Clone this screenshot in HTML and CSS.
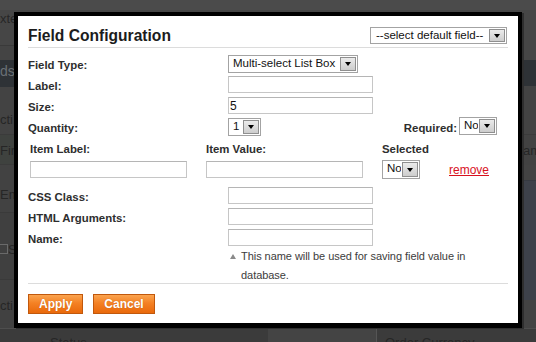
FILE: index.html
```html
<!DOCTYPE html>
<html>
<head>
<meta charset="utf-8">
<link rel="stylesheet" href="styles.css">
</head>
<body>
<div class="page">
  <div class="bg-col">
    <div class="band b-top"></div>
    <div class="band b-ctx"><span class="t">xte</span></div>
    <div class="band b-gap"></div>
    <div class="band b-dark"><span class="t t-fields">ds</span></div>
    <div class="band b-act"><span class="t">cti</span></div>
    <div class="band b-first"><span class="t">Firs</span></div>
    <div class="band b-email"><span class="t">Em</span></div>
    <div class="band b-chk"><span class="chk"></span><span class="t">S</span></div>
    <div class="band b-act2"><span class="t">cti</span></div>
    <div class="band b-bottom"><span class="t t-bot">Status</span></div>
  </div>
  <div class="bg-col">
    <div class="band b-top"></div>
    <div class="band r-a"></div>
    <div class="band b-dark r-dark"></div>
    <div class="band r-b"></div>
    <div class="band r-name"><span class="t t-name">am</span></div>
    <div class="band r-c"></div>
    <div class="band r-blue"></div>
    <div class="band r-d"></div>
    <div class="band b-bottom r-bottom"><span class="t t-order">Order Currency</span></div>
  </div>
</div>

<div class="modal">
  <div class="modal-head">
    <h2 class="title">Field Configuration</h2>
    <div class="sel sel-default"><span class="sel-text">--select default field--</span><span class="sel-btn"></span></div>
  </div>

  <div class="fields">
    <div class="row">
      <span class="lbl">Field Type:</span>
      <div class="ctl"><div class="sel sel-type"><span class="sel-text">Multi-select List Box</span><span class="sel-btn"></span></div></div>
    </div>
    <div class="row">
      <span class="lbl">Label:</span>
      <div class="ctl"><input class="inp" type="text" value=""></div>
    </div>
    <div class="row">
      <span class="lbl">Size:</span>
      <div class="ctl"><input class="inp" type="text" value="5"></div>
    </div>
    <div class="row">
      <span class="lbl">Quantity:</span>
      <div class="ctl ctl-split">
        <div class="sel sel-small"><span class="sel-text">1</span><span class="sel-btn"></span></div>
        <div class="req">
          <span class="lbl">Required:</span>
          <div class="sel sel-no"><span class="sel-text">No</span><span class="sel-btn"></span></div>
        </div>
      </div>
    </div>

    <div class="items">
      <span class="lbl">Item Label:</span>
      <span class="lbl">Item Value:</span>
      <span class="lbl">Selected</span>
      <span></span>
      <input class="inp inp-item" type="text" value="">
      <input class="inp inp-item" type="text" value="">
      <div class="sel sel-no sel-sel"><span class="sel-text">No</span><span class="sel-btn"></span></div>
      <a class="remove" href="#">remove</a>
    </div>

    <div class="row">
      <span class="lbl">CSS Class:</span>
      <div class="ctl"><input class="inp" type="text" value=""></div>
    </div>
    <div class="row">
      <span class="lbl">HTML Arguments:</span>
      <div class="ctl"><input class="inp" type="text" value=""></div>
    </div>
    <div class="row row-last">
      <span class="lbl">Name:</span>
      <div class="ctl"><input class="inp" type="text" value=""></div>
    </div>
    <div class="note-row">
      <span></span>
      <div class="note"><span class="tri"></span><span class="note-text">This name will be used for saving field value in database.</span></div>
    </div>
  </div>

  <div class="modal-foot">
    <button class="btn" type="button">Apply</button>
    <button class="btn" type="button">Cancel</button>
  </div>
</div>
</body>
</html>
```

FILE: styles.css
```css
* { box-sizing: border-box; }
html, body { margin: 0; padding: 0; }
body {
  width: 536px;
  height: 342px;
  overflow: hidden;
  position: relative;
  background: #444;
  font-family: "Liberation Sans", Arial, sans-serif;
}

/* dimmed page behind the dialog */
.page { display: grid; grid-template-columns: 268px 268px; height: 342px; }
.bg-col { display: flex; flex-direction: column; }
.band { flex: none; overflow: hidden; white-space: nowrap; font-size: 13px; color: #262626; display: flex; align-items: flex-start; }
.t { display: block; line-height: 15px; }
.b-top { height: 10px; background: #4b4b4b; }
.b-ctx { height: 36px; background: #464646; border-bottom: 1px solid #3a3a3a; padding-top: 1px; }
.b-gap { height: 14px; background: #444; }
.b-dark { height: 27px; background: #2e3236; padding-top: 4px; }
.t-fields { color: #6a7075; font-size: 14px; }
.b-act { height: 48px; background: #434343; padding-top: 25px; border-bottom: 1px solid #3b3b3b; }
.b-first { height: 30px; background: #3f423f; padding-top: 8px; border-bottom: 1px solid #3b3b3b; }
.b-email { height: 48px; background: #424242; padding-top: 22px; border-bottom: 1px solid #3a3a3a; }
.b-chk { height: 67px; background: #404040; padding-top: 29px; border-bottom: 1px solid #3a3a3a; }
.chk { width: 9px; height: 10px; border: 1px solid #6a6a6a; margin: 2px 0 0 -1px; }
.b-act2 { height: 48px; background: #414141; padding-top: 18px; }
.b-bottom { height: 14px; background: #3b3b3b; border-top: 1px solid #4e4e4e; padding-top: 6px; }
.t-bot { margin-left: 50px; }
.r-a { height: 50px; background: #464646; }
.r-dark { height: 26px; }
.r-b { height: 49px; background: #434343; border-bottom: 1px solid #3b3b3b; }
.r-name { height: 30px; background: #424242; padding-top: 8px; }
.t-name { margin-left: 255px; }
.r-c { height: 15px; background: #434343; }
.r-blue { height: 120px; background: #3d414a; border-top: 1px solid #363a42; }
.r-d { height: 28px; background: #434343; }
.r-bottom { border-left: 1px solid #555; margin-left: 108px; padding-left: 8px; }

/* dialog */
.modal {
  position: absolute;
  left: 14px;
  top: 12px;
  width: 508px;
  background: #fff;
  border: 4px solid #000;
  border-bottom-width: 5px;
  box-shadow: 2px 1px 0 #2e2e2e;
}
.modal-head {
  display: flex;
  justify-content: space-between;
  align-items: center;
  margin: 0 10px;
  padding: 11px 1px 3px 0;
  border-bottom: 1px solid #dcdcdc;
}
.title {
  margin: 0;
  font-size: 15.6px;
  line-height: 17px;
  font-weight: bold;
  color: #1c1c1c;
}

/* select boxes */
.sel {
  display: flex;
  height: 18px;
  border: 1px solid #a3a3a3;
  background: #fff;
  font-size: 11.5px;
  color: #111;
  overflow: hidden;
}
.sel-text { flex: 1; padding-left: 4px; line-height: 15px; white-space: nowrap; overflow: hidden; }
.sel-btn {
  flex: none;
  width: 16px;
  margin: 1px;
  background: linear-gradient(#ebebeb, #cdcdcd);
  border: 1px solid #8f8f8f;
  display: flex;
  align-items: center;
  justify-content: center;
}
.sel-btn::before {
  content: "";
  border-left: 3px solid transparent;
  border-right: 3px solid transparent;
  border-top: 4px solid #000;
}
.sel-default { width: 137px; height: 17px; }
.sel-default .sel-text { padding-left: 5px; line-height: 14px; }
.sel-type { width: 130px; }
.sel-small { width: 33px; }
.sel-no { width: 38px; }
.sel-sel { height: 19px; margin-top: -1px; }

/* inputs */
.inp {
  display: block;
  width: 145px;
  height: 17px;
  margin: 0;
  padding: 0 2px 0 1px;
  border: 1px solid #c6c6c6;
  border-top-color: #b5b5b5;
  background: #fff;
  font-family: "Liberation Sans", Arial, sans-serif;
  font-size: 12px;
  color: #111;
  outline: none;
}
.inp-item { width: 157px; }

/* field rows */
.fields { margin: 7px 10px 0; }
.row { display: grid; grid-template-columns: 200px 1fr; height: 21px; align-items: start; }
.row-last { height: 18px; }
.lbl {
  font-size: 11.4px;
  font-weight: bold;
  color: #2e2e2e;
  line-height: 17px;
  padding-top: 2px;
  white-space: nowrap;
}
.ctl-split { display: flex; justify-content: space-between; align-items: flex-start; padding-right: 11px; }
.req { display: flex; gap: 2px; align-items: flex-start; margin-top: -1px; }
.req .lbl { padding-top: 3px; }

.items {
  display: grid;
  grid-template-columns: 176px 176px 67px auto;
  grid-template-rows: 22px 26px;
  align-items: start;
  padding-left: 2px;
}
.remove {
  font-size: 12px;
  color: #d8111e;
  text-decoration: underline;
  line-height: 17px;
  margin-top: 1px;
}

.note-row { display: grid; grid-template-columns: 200px 1fr; margin-bottom: -2px; }
.note { display: flex; }
.tri {
  flex: none;
  width: 13px;
  height: 19px;
  display: flex;
  align-items: center;
  padding-left: 2px;
}
.tri::before {
  content: "";
  border-left: 3px solid transparent;
  border-right: 3px solid transparent;
  border-bottom: 5px solid #8a8a8a;
}
.note-text { font-size: 11px; line-height: 19px; color: #3c3c3c; max-width: 250px; letter-spacing: -0.05px; }

/* footer */
.modal-foot {
  display: flex;
  gap: 10px;
  margin: 0 10px;
  padding: 10px 0 9px;
  border-top: 1px solid #dcdcdc;
}
.btn {
  height: 20px;
  padding: 0 10px;
  border: 1px solid #c1580c;
  background: linear-gradient(#fba44f, #f48124 45%, #e9690b);
  color: #fff;
  font-family: "Liberation Sans", Arial, sans-serif;
  font-size: 12px;
  font-weight: bold;
  line-height: 18px;
  text-shadow: 0 0 1px rgba(150, 60, 0, 0.5);
  cursor: pointer;
}
```
